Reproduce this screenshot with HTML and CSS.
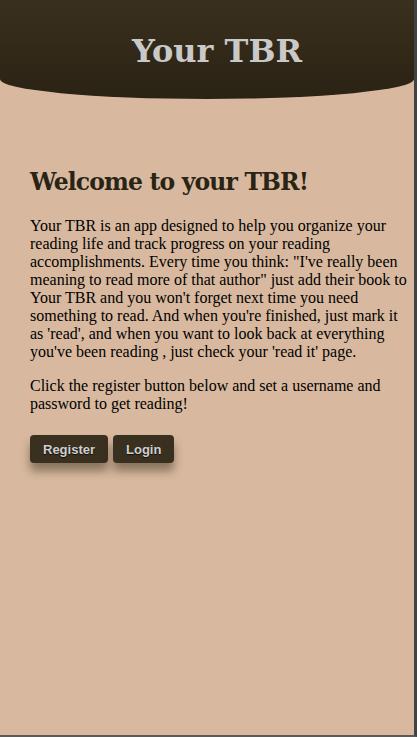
FILE: index.html
```html
<!DOCTYPE html>
<html lang="en">
<head>
<meta charset="utf-8">
<title>Your TBR</title>
<link rel="stylesheet" href="styles.css">
</head>
<body>
<div class="page">
  <header class="hero">
    <h1 class="hero-title">Your TBR</h1>
  </header>
  <main class="content">
    <h2 class="welcome">Welcome to your TBR!</h2>
    <p class="text">Your TBR is an app designed to help you organize your reading life and track progress on your reading accomplishments. Every time you think: "I've really been meaning to read more of that author" just add their book to Your TBR and you won't forget next time you need something to read. And when you're finished, just mark it as 'read', and when you want to look back at everything you've been reading , just check your 'read it' page.</p>
    <p class="text">Click the register button below and set a username and password to get reading!</p>
    <div class="actions">
      <button class="btn">Register</button>
      <button class="btn">Login</button>
    </div>
  </main>
</div>
</body>
</html>
```
FILE: styles.css
```css
html, body {
  margin: 0;
  padding: 0;
}
body {
  background: #d8b99f;
  font-family: "Liberation Serif", "Times New Roman", serif;
}
.page {
  box-sizing: border-box;
  min-height: 737px;
  border-right: 3px solid #424242;
  border-bottom: 2px solid #5a5a5a;
}
.hero {
  height: 99px;
  background: linear-gradient(to bottom, #3a301f, #2a2213);
  border-bottom-left-radius: 50% 20px;
  border-bottom-right-radius: 50% 20px;
  display: flex;
  justify-content: center;
  padding: 32px 0 0 20px;
  box-sizing: border-box;
}
.hero-title {
  margin: 0;
  font-family: "DejaVu Serif", Georgia, serif;
  font-weight: bold;
  font-size: 32px;
  line-height: 38px;
  color: #c9c9c9;
}
.content {
  padding: 67px 4px 0 30px;
}
.welcome {
  margin: 0 0 19px;
  font-family: "DejaVu Serif", Georgia, serif;
  font-weight: bold;
  font-size: 23.5px;
  letter-spacing: -0.85px;
  line-height: 32px;
  color: #2a2414;
}
.text {
  margin: 0 0 16px;
  font-size: 16px;
  color: #000;
}
.actions {
  display: flex;
  gap: 5px;
  margin-top: 22px;
}
.btn {
  font-family: "Liberation Sans", Arial, sans-serif;
  font-weight: bold;
  font-size: 13px;
  color: #cfcfcf;
  text-shadow: 0 1px 1px rgba(0, 0, 0, 0.7);
  background: #3a3020;
  border: none;
  border-radius: 4px;
  height: 28px;
  padding: 0 13px;
  box-shadow: 0 8px 10px rgba(40, 30, 15, 0.45);
}
```
